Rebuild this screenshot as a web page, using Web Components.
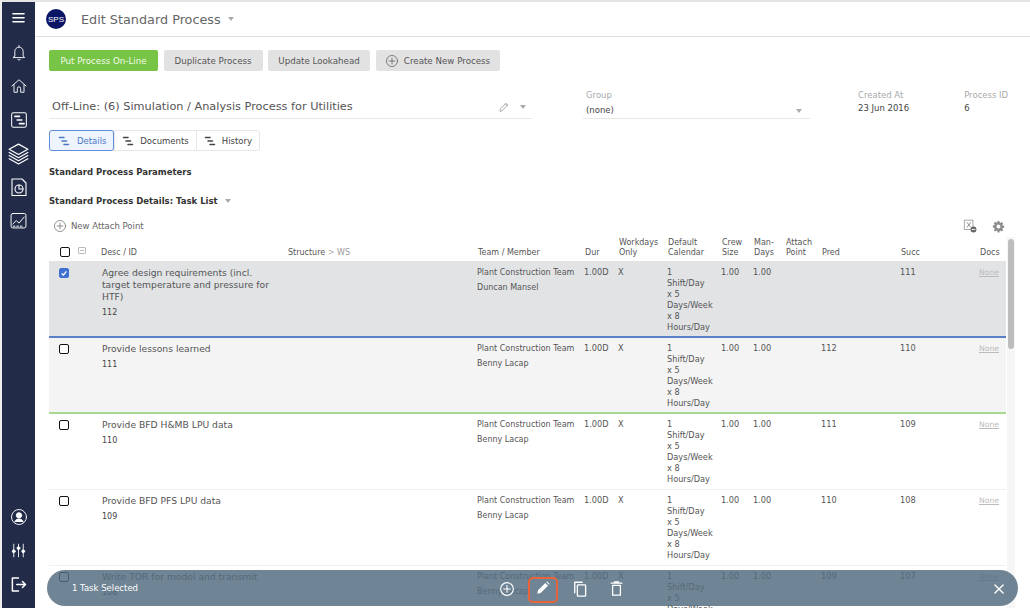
<!DOCTYPE html>
<html><head><meta charset="utf-8"><title>Edit Standard Process</title>
<style>
html,body{margin:0;height:100%;overflow:hidden;background:#fff;font-family:"DejaVu Sans",sans-serif;color:#555}
</style></head><body>
<sps-app></sps-app>
<script>
const ic={
 burger:'<path d="M5 6h14M5 11h14M5 16h14" stroke-width="2"/>',
 bell:'<path d="M12 3v1.500M7 15.500V10a5 5 0 0 1 10 0v5.500l1.800 2H5.200zM10.500 19.500a1.600 1.600 0 0 0 3 0"/>',
 home:'<path d="M3.500 12 12 4.500l8.500 7.500M6 10.500V19.500h4v-4.500a2 2 0 0 1 4 0v4.500h4V10.500"/>',
 gantt:'<rect x="4" y="4" width="16" height="16" rx="2"/><path d="M7.500 8h5M10 12h5M12.500 16h5" stroke-width="1.800"/>',
 layers:'<path d="M12 3 21 8l-9 5-9-5zM3 11l9 5 9-5M3 14l9 5 9-5M3 17l9 5 9-5"/>',
 file:'<path d="M5 4h10l4 4v12.500H5z"/><circle cx="12" cy="14" r="4"/><path d="M12 10v4h4"/>',
 chart:'<rect x="3.500" y="4" width="17" height="16.500" rx="2"/><path d="m5.500 16 4-4 3 3 6-7M6 18.500h2M10 18.500h2M14 18.500h2"/>',
 user:'<circle cx="12" cy="12" r="9"/><circle cx="12" cy="10" r="3.200" fill="#fff"/><path d="M7 18c.5-3 3-3.500 5-3.500s4.500.5 5 3.500" fill="#fff"/>',
 sliders:'<path d="M6 4v16M12 4v16M18 4v16"/><circle cx="6" cy="13" r="1.800" fill="#fff"/><circle cx="12" cy="9" r="1.800" fill="#fff"/><circle cx="18" cy="13" r="1.800" fill="#fff"/>',
 logout:'<path d="M12 4.500H5v15h7M10 12h10M16.500 8.500 20 12l-3.500 3.500" stroke-width="1.700"/>',
 plus:'<circle cx="12" cy="12" r="9.500"/><path d="M12 7v10M7 12h10"/>',
 pencil:'<path d="M4 20l1-4.500L16 4.500l3.500 3.500L8.500 19zM14.500 6l3.500 3.500" />',
 pencilFill:'<path d="M3.500 20.500l1-5L15.500 4.500l4 4-11 11zM17 3l1-1 4 4-1 1z" fill="currentColor" stroke="none"/>',
 copy:'<path d="M15 3H5v14"/><rect x="8.500" y="6.500" width="11" height="15" rx="1"/>',
 trash:'<path d="M4.500 4.500h15M9 2.500h6M6.500 7.500h11v14h-11z"/>',
 x:'<path d="M5 5l14 14M19 5 5 19" stroke-width="2.400"/>',
 steps:'<path d="M3 5h9M8 12h9M12 19h9" stroke-width="3"/>',
 gear:'<path d="M12 8.300a3.700 3.700 0 1 0 0 7.400 3.700 3.700 0 0 0 0-7.400zM10.300 2h3.400l.5 2.800 1.700.7 2.300-1.600 2.400 2.400-1.600 2.300.7 1.700 2.800.5v3.400l-2.800.5-.7 1.700 1.600 2.300-2.400 2.400-2.300-1.600-1.700.7-.5 2.800h-3.400l-.5-2.800-1.700-.7-2.300 1.600-2.400-2.400 1.600-2.300-.7-1.700L1.500 13.700v-3.400l2.800-.5.7-1.700L3.400 5.800l2.400-2.400 2.300 1.600 1.700-.7z" fill="currentColor" fill-rule="evenodd" stroke="none"/>',
 sheet:'<path d="M3 2h14v16H3z"/><path d="M7 6l6 8M13 6l-6 8" stroke-width="1.200"/><circle cx="18" cy="18" r="5" fill="currentColor" stroke="none"/><path d="M15.500 18h5" stroke="#fff" stroke-width="1.500"/>'
};
function svg(n,s=24,w=1.400){return `<svg part="i" width="${s}" height="${s}" viewBox="0 0 24 24" fill="none" stroke="currentColor" stroke-width="${w}" stroke-linejoin="round" stroke-linecap="round" style="display:block;flex:none">${ic[n]}</svg>`}
const tri=(c='#aaa')=>`<span style="display:inline-block;width:0;height:0;border:3.500px solid transparent;border-top:4px solid ${c};border-bottom:0"></span>`;
class Base extends HTMLElement{
 connectedCallback(){if(!this.shadowRoot){this.attachShadow({mode:'open'}).innerHTML=this.render()}}
}
customElements.define('sps-icon-link',class extends Base{render(){return `<style>:host{display:flex;height:33.600px;align-items:center;justify-content:center;color:#fff}</style>${svg(this.getAttribute('name'),+(this.getAttribute('size')||20),1.100)}`}});
customElements.define('sps-sidebar',class extends Base{render(){return `<style>
:host{display:flex;flex-direction:column;justify-content:space-between;width:33px;background:#222c49;padding:.2px 0 7px;box-sizing:border-box;flex:none}
div{display:flex;flex-direction:column}</style>
<div><sps-icon-link name="burger" size="19"></sps-icon-link><sps-icon-link name="bell"></sps-icon-link><sps-icon-link name="home"></sps-icon-link><sps-icon-link name="gantt" size="22"></sps-icon-link><sps-icon-link name="layers" size="25"></sps-icon-link><sps-icon-link name="file" size="24"></sps-icon-link><sps-icon-link name="chart" size="21"></sps-icon-link></div>
<div><sps-icon-link name="user" size="20"></sps-icon-link><sps-icon-link name="sliders" size="19"></sps-icon-link><sps-icon-link name="logout" size="21"></sps-icon-link></div>`}});
customElements.define('sps-header',class extends Base{render(){return `<style>
:host{display:flex;align-items:center;height:34px;border-bottom:1px solid #dedede;padding-left:10px;flex:none}
.logo{width:20px;height:20px;border-radius:50%;background:#0b1566;color:#fff;font:8px "Liberation Sans",sans-serif;display:flex;align-items:center;justify-content:center}
h1{font-size:12.800px;font-weight:400;color:#666;margin:0 7px 0 15px}
</style><span class="logo">SPS</span><h1>Edit Standard Process</h1>${tri()}`}});
customElements.define('sps-button',class extends Base{render(){return `<style>
:host{display:inline-flex;align-items:center;justify-content:center;gap:5px;height:21px;box-sizing:border-box;background:#e2e2e2;color:#555;font-size:8.700px;border-radius:2px;white-space:nowrap}
:host([green]){background:#78c447;color:#f2fbe9}
svg{color:#555}
</style>${this.hasAttribute('plus')?svg('plus',14,1.200):''}<slot></slot>`}});
customElements.define('sps-field',class extends Base{render(){return `<style>
:host{display:flex;flex-direction:column;font-size:8.500px;color:#444;padding-top:7px;box-sizing:border-box}
:host([tight]) .l{margin-bottom:2px}
.l{color:#aaa;line-height:11px;margin-bottom:4px}
</style><span class="l">${this.getAttribute('label')}</span><slot></slot>`}});
customElements.define('sps-info',class extends Base{render(){return `<style>
:host{display:flex;height:36px;margin-top:12px;flex:none}
.name{width:483px;box-sizing:border-box;border-bottom:1px solid #e8e8e8;display:flex;align-items:center;gap:10px;padding:12px 6px 0 3px;height:36px;color:#555}
.name b{font-weight:400;font-size:11.300px;flex:1;color:#555}
.name span.p{color:#888;display:flex}
.group{margin-left:51px;width:227px;height:36px;box-sizing:border-box;border-bottom:1px solid #e8e8e8;padding:0 0 0 3px;position:relative}
.group span.t{position:absolute;right:8px;bottom:5px;display:flex}
.c{margin-left:48px}.d{margin-left:55px}
</style>
<div class="name"><b>Off-Line: (6) Simulation / Analysis Process for Utilities</b><span class="p">${svg('pencil',12,1.400)}</span>${tri()}</div>
<div class="group"><sps-field label="Group">(none)</sps-field><span class="t">${tri()}</span></div>
<sps-field tight class="c" label="Created At">23 Jun 2016</sps-field><sps-field tight class="d" label="Process ID">6</sps-field>`}});
customElements.define('sps-tabs',class extends Base{render(){const t=(n,a)=>`<span class="t ${a?'a':''}">${svg('steps',12,2)}${n}</span>`;return `<style>
:host{display:flex;height:21px;margin-top:11px;flex:none;width:211px;box-sizing:border-box;border:1px solid #e6e6e6;border-radius:3px;font-size:8.500px;color:#555}
.t{display:flex;align-items:center;gap:6px;padding:0 7px;box-sizing:border-box;border-left:1px solid #e6e6e6;color:#444}
.t:first-child{border:0}.t:nth-child(2){border:0;width:81px}.t:nth-child(3){flex:1}
.a{width:66px;margin:-1px 0 -1px -1px;border:1px solid #5f8fdc!important;border-radius:3px;background:#eef4fd;color:#4a78c8;padding:0 0 0 8px;gap:7px}
svg{width:12px;height:12px}
</style>${t('Details',1)}${t('Documents')}${t('History')}`}});
customElements.define('sps-section',class extends Base{render(){return `<style>
:host{display:flex;align-items:center;gap:6px;font-size:8.500px;font-weight:700;color:#333;height:12px;flex:none}
</style><slot></slot>${this.hasAttribute('menu')?`<span style="margin-left:1px;display:flex">${tri()}</span>`:''}`}});
customElements.define('sps-toolbar',class extends Base{render(){return `<style>
:host{display:flex;align-items:center;height:16px;margin-top:11px;font-size:8.500px;color:#666;padding:0 1px 0 4px;flex:none;margin-right:9px}
.g{margin-left:auto;display:flex;gap:15px;color:#8b8b8b;align-items:center}
span.a{margin-left:4px}
svg:first-child{color:#666}
</style>${svg('plus',14,1.200)}<span class="a">New Attach Point</span><div class="g">${svg('sheet',14,1)}${svg('gear',13)}</div>`}});
const cols='53px 186px 190px 107px 34px 49px 54px 32px 32px 36px 79px 79px 26px';
customElements.define('sps-task-head',class extends Base{render(){return `<style>
:host{display:grid;grid-template-columns:${cols};align-items:end;height:24px;font-size:8px;line-height:10px;color:#555;flex:none;padding-bottom:3px;box-sizing:border-box}
.c{display:flex;align-items:center;padding-left:11px;gap:8px;padding-bottom:1px}
.b{width:8px;height:8px;border:1.500px solid #111;border-radius:2px}
.m{width:6px;height:5px;border:1px solid #bbb;border-radius:1px;margin-top:-3px;position:relative}
.m i{position:absolute;left:1px;right:1px;top:2px;height:1px;background:#bbb}
.s b{font-weight:400;color:#999}.s em{font-style:normal;color:#aaa}
span{display:block}.dh{margin-left:-1px}
</style>
<div class="c"><span class="b"></span><span class="m"><i></i></span></div><span class="dh">Desc / ID</span><span class="s">Structure <em>&gt;</em> <b>WS</b></span><span>Team / Member</span><span>Dur</span><span>Workdays<br>Only</span><span>Default<br>Calendar</span><span>Crew<br>Size</span><span>Man-<br>Days</span><span>Attach<br>Point</span><span>Pred</span><span>Succ</span><span>Docs</span>`}});
customElements.define('sps-task-row',class extends Base{render(){
 const a=n=>this.getAttribute(n)||'';const on=this.hasAttribute('checked');
 return `<style>
:host{display:grid;grid-template-columns:${cols};height:76px;box-sizing:border-box;padding-top:4.500px;font-size:8.200px;line-height:11px;color:#555;border-bottom:1px solid #f0f0f0;flex:none}
:host([checked]){background:#e1e3e5;border-bottom:2px solid #5b80c8;height:77px;padding-top:5.500px}
:host([state=next]){background:#f4f4f4;border-bottom:2px solid #a9da93}
.k{padding:1px 0 0 10px}
.b{display:block;width:8px;height:8px;border:1.500px solid #111;border-radius:2px;background:#fff;position:relative}
.on{background:#3f70d2;border-color:#3f70d2;color:#fff}
.on svg{position:absolute;left:0;top:0}
.d{font-size:9.200px;line-height:12px;color:#555;padding-right:12px}
.id{margin-top:4px;line-height:12px;font-size:8px;color:#444}
.t .id{margin-top:4px;line-height:11px;color:#555}
.t{font-size:8px;margin-left:-1px}.t~div{margin-left:-1px}
.n{font-size:7.700px;color:#bbb;text-decoration:underline}
</style>
<div class="k"><span class="b ${on?'on':''}">${on?'<svg width="8" height="8" viewBox="0 0 10 10" fill="none" stroke="#fff" stroke-width="1.600"><path d="M2 5.500 4.300 7.500 8 3"/></svg>':''}</span></div>
<div class="d">${a('desc')}<div class="id">${a('tid')}</div></div><div></div>
<div class="t"><div>Plant Construction Team</div><div class="id">${a('member')}</div></div>
<div>1.00D</div><div>X</div><div class="cal">1<br>Shift/Day<br>x 5<br>Days/Week<br>x 8<br>Hours/Day</div><div>1.00</div><div>1.00</div><div></div><div>${a('pred')}</div><div>${a('succ')}</div><div class="n">None</div>`}});
customElements.define('sps-task-table',class extends Base{render(){return `<style>
:host{display:flex;flex:1;min-height:0;margin-top:3px}
.m{display:flex;flex-direction:column;width:957px;overflow:hidden;flex:none}
.tr{width:8px;margin-left:1px;background:#f6f6f6;flex:none;padding-top:2px;box-sizing:border-box}
.th{display:block;width:6px;height:110px;margin-left:1px;background:#bdbdbd;border-radius:3px}
</style><div class="m"><sps-task-head></sps-task-head><slot></slot></div><div class="tr"><span class="th"></span></div>`}});
customElements.define('sps-action-bar',class extends Base{render(){return `<style>
:host{position:absolute;left:45px;right:12px;top:568px;height:36px;border-radius:18px;background:rgba(84,108,128,.84);color:#fff;font-size:8.500px;display:block}
span,svg,i{position:absolute}
span{left:25px;top:12px;line-height:13px}
i{left:481px;top:7px;width:26px;height:22px;border:2px solid #e8643a;border-radius:5px}
</style><span>1 Task Selected</span>
${svg('plus',16,1.700).replace('style="','style="left:452px;top:11px;')}
<i></i>${svg('pencilFill',16,1).replace('style="','style="left:488px;top:10px;')}
${svg('copy',18,1.800).replace('style="','style="left:524px;top:10px;')}
${svg('trash',17,1.800).replace('style="','style="left:561px;top:10px;')}
${svg('x',14,1.500).replace('style="','style="left:945px;top:12px;')}`}});
customElements.define('sps-app',class extends Base{render(){return `<style>
:host{display:flex;height:608px;width:1030px;position:relative;box-sizing:border-box;border-top:2px solid #e4e4e4;border-left:2px solid #efefef;overflow:hidden;background:#fff}
main{flex:1;display:flex;flex-direction:column;min-width:0;margin-left:1px;height:606px}
.body{flex:1;display:flex;flex-direction:column;padding:13px 0 0 13px;min-height:0;margin-right:15px}
.btns{display:flex;gap:5.500px;flex:none}
.p1{margin-top:15px}.p2{margin-top:17px}
</style><sps-sidebar></sps-sidebar><main><sps-header></sps-header><div class="body">
<div class="btns"><sps-button green style="width:109px">Put Process On-Line</sps-button><sps-button style="width:99px">Duplicate Process</sps-button><sps-button style="width:102px">Update Lookahead</sps-button><sps-button plus style="width:124px">Create New Process</sps-button></div>
<sps-info></sps-info><sps-tabs></sps-tabs>
<sps-section class="p1">Standard Process Parameters</sps-section>
<sps-section class="p2" menu>Standard Process Details: Task List</sps-section>
<sps-toolbar></sps-toolbar>
<sps-task-table>
<sps-task-row checked desc="Agree design requirements (incl. target temperature and pressure for HTF)" tid="112" member="Duncan Mansel" succ="111"></sps-task-row>
<sps-task-row state="next" desc="Provide lessons learned" tid="111" member="Benny Lacap" pred="112" succ="110"></sps-task-row>
<sps-task-row desc="Provide BFD H&amp;MB LPU data" tid="110" member="Benny Lacap" pred="111" succ="109"></sps-task-row>
<sps-task-row desc="Provide BFD PFS LPU data" tid="109" member="Benny Lacap" pred="110" succ="108"></sps-task-row>
<sps-task-row desc="Write TOR for model and transmit" tid="108" member="Benny Lacap" pred="109" succ="107"></sps-task-row>
</sps-task-table></div></main><sps-action-bar></sps-action-bar>`}});
</script></body></html>
